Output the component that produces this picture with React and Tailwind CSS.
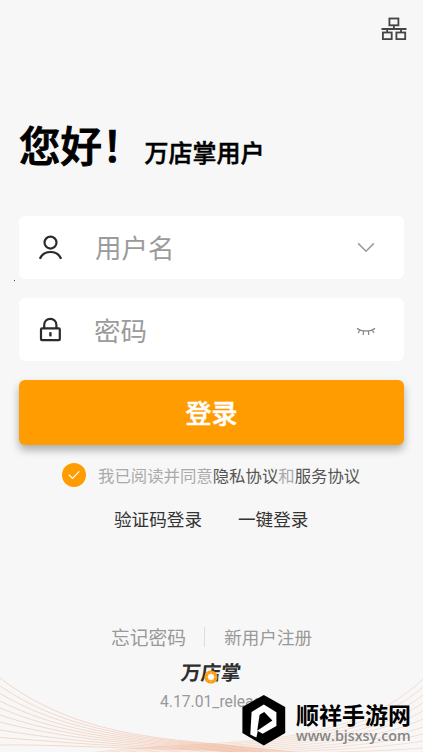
import React, { useState } from "react";

const LEFT_STARTS = [678, 686, 693.5, 701, 708, 715, 722, 730, 737.5, 745];
const RIGHT_ENDS = [679, 687, 695, 703, 711, 719, 727, 734, 741, 748];

function WaveLines() {
  return (
    <svg className="absolute inset-0 h-[752px] w-[423px] pointer-events-none" viewBox="0 0 423 752" fill="none">
      {LEFT_STARTS.map((y, i) => (
        <path
          key={y}
          d={`M0 ${y} C 55 ${y + (744 - y) * 0.64}, 115 ${734 + i * 1.6}, 190 ${741.5 + i * 0.9} S 300 ${752 + i * 2}, 330 ${758 + i * 2}`}
          stroke="#f0b090"
          strokeOpacity="0.75"
          strokeWidth="0.6"
        />
      ))}
      {RIGHT_ENDS.map((y, i) => (
        <path
          key={y}
          d={`M90 ${753 + i * 1.6} C 190 ${738 + i * 1.6}, 345 ${756 - i * 0.2}, 423 ${y}`}
          stroke="#f0b090"
          strokeOpacity="0.6"
          strokeWidth="0.6"
        />
      ))}
    </svg>
  );
}

function NetworkIcon() {
  return (
    <svg width="26" height="24" viewBox="0 0 26 24" fill="none" stroke="#444" strokeWidth="1.8">
      <rect x="8.4" y="1.5" width="9" height="6.8" />
      <path d="M12.9 8.3v3.7M0.5 12h25M6.2 12v3.5M20 12v3.5" />
      <rect x="1.9" y="15.5" width="8.8" height="6.6" />
      <rect x="15.4" y="15.5" width="8.8" height="6.6" />
    </svg>
  );
}

function UserIcon() {
  return (
    <svg width="24" height="26" viewBox="0 0 24 26" fill="none" stroke="#2b2b2b" strokeWidth="2.2">
      <circle cx="11.5" cy="7.6" r="6" />
      <path d="M0.9 23.8 C2.7 19.4 6.7 17 11.5 17 S20.3 19.4 22.1 23.8" />
    </svg>
  );
}

function LockIcon() {
  return (
    <svg width="24" height="26" viewBox="0 0 24 26" fill="none" stroke="#2b2b2b" strokeWidth="2.2">
      <rect x="2" y="11.4" width="18.8" height="11.8" rx="1" />
      <path d="M5.2 11.4V7.9a6.1 6.1 0 0 1 12.2 0v3.5" />
      <path d="M11.4 15.2v4.2" strokeWidth="2.4" />
    </svg>
  );
}

function ClosedEyeIcon() {
  return (
    <svg width="20" height="9" viewBox="0 0 20 9" fill="none" stroke="#858585" strokeWidth="1.2">
      <path d="M1 1.2 C5 4.8 15 4.8 19 1.2" />
      <path d="M3.8 3 L2.2 6M7.6 4 L7.2 8M12.4 4 L12.8 8M16.2 3 L18 6" />
    </svg>
  );
}

function BrandLogo() {
  return (
    <div className="relative h-6 w-[60px]">
      <span className="block -skew-x-6 whitespace-nowrap text-[20px] font-bold leading-6 text-[#2d2d2d]">万店掌</span>
      <svg className="absolute left-[23px] top-[10px]" width="14" height="14" viewBox="0 0 14 14">
        <circle cx="7" cy="7" r="6.6" fill="#fa9d13" />
        <circle cx="7" cy="7" r="3" fill="#fff" />
        <path d="M7 2v2M7 10v2M2 7h2M10 7h2M3.5 3.5l1.4 1.4M9.1 9.1l1.4 1.4M3.5 10.5l1.4-1.4M9.1 4.9l1.4-1.4" stroke="#ffd48c" strokeWidth="0.7" />
      </svg>
    </div>
  );
}

function SiteMark() {
  return (
    <div className="absolute left-[242px] top-[695px] flex">
      <svg width="44" height="51" viewBox="0 0 44 51">
        <path d="M21.8 0 L43.2 12 V38 L21.8 50.6 L0.4 38 V12 Z" fill="#000" />
        <path d="M9.6 17 L21.8 9.6 L34.4 17.2 V31 L20.6 38.8 L15.8 36 L14.4 42.6 L8.3 39.4 Z" fill="#fff" />
        <path d="M17.6 19.8 L22.2 17 L30.4 25.4 L15.2 35.8 Z" fill="#000" />
      </svg>
      <div className="ml-[10px] pt-[7px]">
        <div className="h-6 whitespace-nowrap text-[23px] font-bold leading-6 text-black">顺祥手游网</div>
        <div className="mt-[3px] h-[15px] whitespace-nowrap font-['Open_Sans',sans-serif] text-[14.3px] font-semibold leading-[14px] text-[#858585]">www.bjsxsy.com</div>
      </div>
    </div>
  );
}

export default function App() {
  const [agreed, setAgreed] = useState(true);

  return (
    <div className="relative flex h-[752px] w-[423px] flex-col overflow-hidden bg-[#f7f7f7] px-[19px] font-['Noto_Sans_CJK_SC',sans-serif]">
      <WaveLines />

      <div className="flex h-[109px] justify-end pt-[17px]">
        <div className="-mr-[3px]">
          <NetworkIcon />
        </div>
      </div>

      <h1 className="flex h-[71px] items-baseline whitespace-nowrap text-black">
        <span className="text-[41.5px] font-medium leading-[70px] [-webkit-text-stroke:1px_#000]">您好！</span>
        <span className="ml-px text-[24px] font-medium [-webkit-text-stroke:0.5px_#000]">万店掌用户</span>
      </h1>

      <div className="mt-9 flex h-[63px] items-center rounded-md bg-white pl-5 pr-[29px]">
        <UserIcon />
        <input className="ml-8 w-[230px] pb-0.5 text-[26.5px] outline-none placeholder:text-[#9b9b9b]" placeholder="用户名" />
        <svg className="ml-auto" width="18" height="11" viewBox="0 0 18 11" fill="none" stroke="#999" strokeWidth="1.5">
          <path d="M1.2 1.4 L9 9.2 L16.8 1.4" />
        </svg>
      </div>

      <div className="mt-[19px] flex h-[63px] items-center rounded-md bg-white pl-5 pr-7">
        <LockIcon />
        <input type="text" className="ml-[31px] w-[230px] text-[26.5px] outline-none placeholder:text-[#9b9b9b]" placeholder="密码" />
        <div className="ml-auto pt-[3px]">
          <ClosedEyeIcon />
        </div>
      </div>

      <button className="mt-[19px] h-[65px] rounded-md bg-[#ff9c02] pb-0.5 text-[26px] font-medium text-white shadow-[0_5px_8px_rgba(0,0,0,0.3)] [-webkit-text-stroke:0.5px_#fff]">
        登录
      </button>

      <div className="mt-[18px] flex h-6 items-center pl-[43px]">
        <button onClick={() => setAgreed(!agreed)} className="flex size-6 items-center justify-center rounded-full bg-[#ff9c02]">
          {agreed && (
            <svg width="12" height="10" viewBox="0 0 12 10" fill="none" stroke="#fff" strokeWidth="1.2">
              <path d="M0.8 4.8 L4.5 8.4 L11.3 1.4" />
            </svg>
          )}
        </button>
        <p className="ml-3 whitespace-nowrap text-[16.4px] text-[#aaa]">
          我已阅读并同意<span className="text-[#555]">隐私协议</span>和<span className="text-[#555]">服务协议</span>
        </p>
      </div>

      <div className="mt-5 flex h-6 items-center gap-9 whitespace-nowrap pl-[95px] text-[17.6px] text-[#333]">
        <span>验证码登录</span>
        <span>一键登录</span>
      </div>

      <footer className="mt-[94px] flex flex-col">
        <div className="flex h-6 items-center whitespace-nowrap pl-[92px] text-[#999]">
          <span className="text-[18.8px]">忘记密码</span>
          <span className="ml-[18px] h-5 w-px bg-[#ddd]" />
          <span className="ml-[19px] text-[17.6px]">新用户注册</span>
        </div>
        <div className="mt-[11px] pl-[162px]">
          <BrandLogo />
        </div>
        <p className="mt-2 pl-[141px] font-[Roboto,sans-serif] text-[15.7px] leading-5 text-[#999]">4.17.01_release</p>
      </footer>

      <i className="absolute left-[14px] top-[280px] size-px bg-[#444]" />
      <SiteMark />
    </div>
  );
}
